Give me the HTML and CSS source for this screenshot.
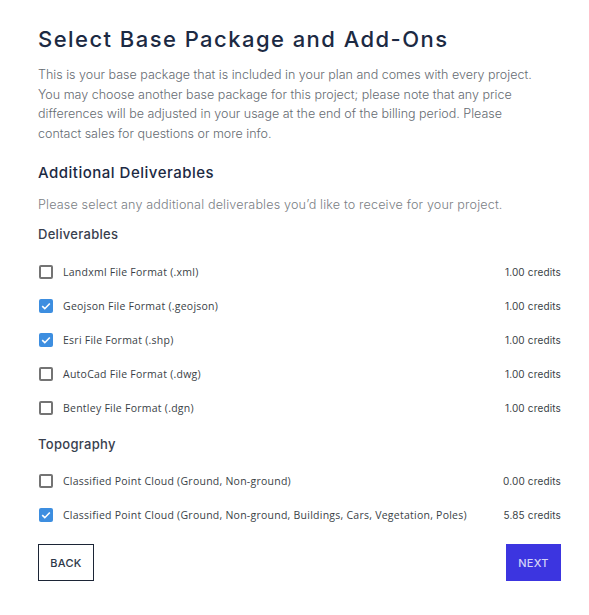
FILE: index.html
```html
<!DOCTYPE html>
<html>
<head>
<meta charset="utf-8">
<link rel="stylesheet" href="styles.css">
</head>
<body>
<div class="page">
  <h1 class="title">Select Base Package and Add-Ons</h1>
  <p class="intro">This is your base package that is included in your plan and comes with every project. You may choose another base package for this project; please note that any price differences will be adjusted in your usage at the end of the billing period. Please contact sales for questions or more info.</p>
  <h2 class="subtitle">Additional Deliverables</h2>
  <p class="hint">Please select any additional deliverables you’d like to receive for your project.</p>

  <h3 class="group">Deliverables</h3>
  <ul class="list">
    <li class="row"><span class="box"></span><span class="label">Landxml File Format (.xml)</span><span class="credits">1.00 credits</span></li>
    <li class="row"><span class="box checked"><svg viewBox="0 0 14 14"><path d="M3.2 7.2l2.6 2.5 5-5.2" fill="none" stroke="#fff" stroke-width="1.6"/></svg></span><span class="label">Geojson File Format (.geojson)</span><span class="credits">1.00 credits</span></li>
    <li class="row"><span class="box checked"><svg viewBox="0 0 14 14"><path d="M3.2 7.2l2.6 2.5 5-5.2" fill="none" stroke="#fff" stroke-width="1.6"/></svg></span><span class="label">Esri File Format (.shp)</span><span class="credits">1.00 credits</span></li>
    <li class="row"><span class="box"></span><span class="label">AutoCad File Format (.dwg)</span><span class="credits">1.00 credits</span></li>
    <li class="row"><span class="box"></span><span class="label">Bentley File Format (.dgn)</span><span class="credits">1.00 credits</span></li>
  </ul>

  <h3 class="group">Topography</h3>
  <ul class="list">
    <li class="row"><span class="box"></span><span class="label">Classified Point Cloud (Ground, Non-ground)</span><span class="credits">0.00 credits</span></li>
    <li class="row"><span class="box checked"><svg viewBox="0 0 14 14"><path d="M3.2 7.2l2.6 2.5 5-5.2" fill="none" stroke="#fff" stroke-width="1.6"/></svg></span><span class="label">Classified Point Cloud (Ground, Non-ground, Buildings, Cars, Vegetation, Poles)</span><span class="credits">5.85 credits</span></li>
  </ul>

  <div class="actions">
    <button class="btn back">BACK</button>
    <button class="btn next">NEXT</button>
  </div>
</div>
</body>
</html>
```
FILE: styles.css
```css
* { box-sizing: border-box; }
html, body { margin: 0; padding: 0; background: #fff; }
body { font-family: "Open Sans", "Liberation Sans", sans-serif; }
.page {
  padding: 24px 28px 0 38px;
  width: 589px;
}
.title {
  margin: 0;
  font-family: "Inter", "Liberation Sans", sans-serif;
  font-weight: 500;
  font-size: 22px;
  letter-spacing: 1.45px;
  color: #1c2a43;
  line-height: 30px;
}
.intro {
  margin: 11px 0 0;
  max-width: 500px;
  font-family: "Inter", sans-serif;
  font-weight: 300;
  font-size: 12.5px;
  line-height: 19.6px;
  color: #666b72;
  letter-spacing: 0;
}
.subtitle {
  margin: 20px 0 0;
  font-family: "Inter", sans-serif;
  font-weight: 500;
  font-size: 15px;
  letter-spacing: 0.5px;
  color: #1c2a43;
  line-height: 20px;
}
.hint {
  margin: 12px 0 0;
  font-family: "Inter", sans-serif;
  font-weight: 300;
  font-size: 12.6px;
  line-height: 19px;
  color: #7a7e84;
  letter-spacing: 0.15px;
}
.group {
  margin: 11px 0 0;
  font-family: "Inter", sans-serif;
  font-weight: 500;
  font-size: 13px;
  letter-spacing: 0.3px;
  color: #38404e;
  line-height: 18px;
}
.list {
  list-style: none;
  margin: 12px 0 0;
  padding: 0;
}
.list + .group + .list { margin-top: 11px; }
.row {
  display: flex;
  align-items: center;
  height: 34px;
}
.box {
  width: 14px;
  height: 14px;
  margin-left: 1px;
  border: 2px solid #747474;
  border-radius: 2px;
  flex: none;
  display: flex;
}
.box.checked {
  border: none;
  background: #3d8ee0;
}
.box svg { width: 14px; height: 14px; }
.label {
  margin-left: 10px;
  font-family: "Open Sans", sans-serif;
  font-size: 10.5px;
  letter-spacing: 0.25px;
  color: #3a3f47;
  flex: 1;
}
.credits {
  font-family: "Inter", sans-serif;
  font-size: 10px;
  color: #3a3f47;
  letter-spacing: 0.15px;
}
.list + .group { margin-top: 10px; }
.actions {
  display: flex;
  justify-content: space-between;
  margin-top: 12px;
}
.btn {
  height: 37px;
  font-family: "Inter", "Liberation Sans", sans-serif;
  font-size: 11px;
  font-weight: 500;
  letter-spacing: 0.3px;
  cursor: pointer;
  padding: 0;
  border-radius: 0;
}
.back {
  width: 56px;
  background: #fff;
  border: 1.5px solid #1c2536;
  color: #2d3748;
}
.next {
  width: 55px;
  background: #3c35e0;
  border: none;
  color: #d4d3f7;
}
```
